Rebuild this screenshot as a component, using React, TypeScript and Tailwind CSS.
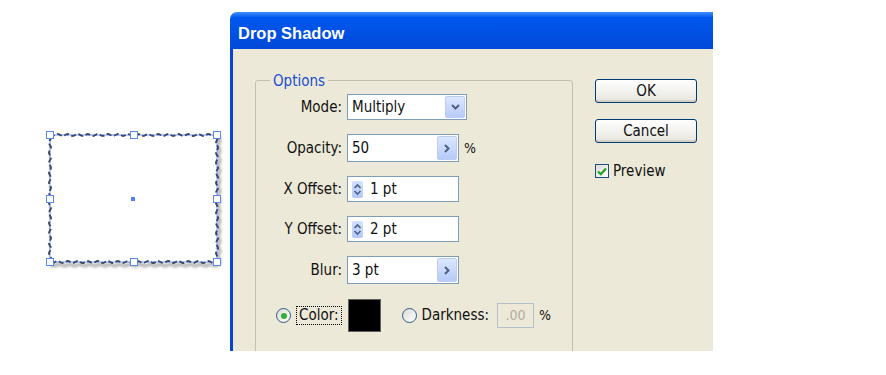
import React from "react";

// wavy outline for the roughened shape on the canvas
function wavyRect(x0: number, y0: number, x1: number, y1: number) {
  const pts: string[] = [];
  const step = 1.5;
  const amp = 0.9;
  const push = (x: number, y: number) => pts.push(`${x.toFixed(1)},${y.toFixed(1)}`);
  for (let x = x0; x <= x1; x += step) push(x, y0 + Math.sin(x / 1.6) * amp);
  for (let y = y0; y <= y1; y += step) push(x1 + Math.sin(y / 1.6) * amp, y);
  for (let x = x1; x >= x0; x -= step) push(x, y1 + Math.sin(x / 1.6) * amp);
  for (let y = y1; y >= y0; y -= step) push(x0 + Math.sin(y / 1.6) * amp, y);
  return "M" + pts.join(" L") + " Z";
}

function Artwork() {
  const d = wavyRect(10, 10, 177, 137);
  const hx = [10, 94, 177];
  const hy = [10, 74, 137];
  const handles: [number, number][] = [];
  hx.forEach((x) => hy.forEach((y) => !(x === 94 && y === 74) && handles.push([x, y])));
  return (
    <svg width="190" height="150" viewBox="0 0 190 150">
      <defs>
        <filter id="sh" x="-10%" y="-10%" width="120%" height="120%">
          <feGaussianBlur stdDeviation="1.6" />
        </filter>
      </defs>
      <path d={d} transform="translate(2 3)" fill="none" stroke="#9a9a9a" strokeWidth="2.5" filter="url(#sh)" />
      <path d={d} fill="#fff" stroke="#1e1e1e" strokeWidth="1.8" strokeDasharray="5 2.6" />
      <rect x="10" y="10" width="167" height="127" fill="none" stroke="#5b86ec" strokeWidth="0.8" />
      {handles.map(([x, y]) => (
        <rect key={`${x}-${y}`} x={x - 3.5} y={y - 3.5} width="7" height="7" fill="#fff" stroke="#5b86ec" strokeWidth="1" />
      ))}
      <rect x="91" y="72" width="4" height="4" fill="#4f7ff0" />
    </svg>
  );
}

function ArrowBtn({ dir }: { dir: "down" | "right" }) {
  return (
    <div className="m-px flex w-[20px] items-center justify-center rounded-[2px] border border-[#bccdf5] bg-linear-to-b from-[#dce7ff] to-[#b7cbfa]">
      {dir === "down" ? (
        <svg width="9" height="6" viewBox="0 0 9 6">
          <path d="M1 1 L4.5 4.5 L8 1" fill="none" stroke="#4d6185" strokeWidth="2" />
        </svg>
      ) : (
        <svg width="6" height="9" viewBox="0 0 6 9">
          <path d="M1 1 L4.5 4.5 L1 8" fill="none" stroke="#4d6185" strokeWidth="2" />
        </svg>
      )}
    </div>
  );
}

function Spinner() {
  return (
    <div className="ml-[4px] flex h-[17px] w-[11px] items-center justify-center self-center rounded-[2px] bg-linear-to-b from-[#d4e1ff] to-[#b4c8f8]">
      <svg width="9" height="15" viewBox="0 0 9 15">
        <path d="M1.5 6 L4.5 3 L7.5 6" fill="none" stroke="#4d6185" strokeWidth="1.6" />
        <path d="M1.5 9 L4.5 12 L7.5 9" fill="none" stroke="#4d6185" strokeWidth="1.6" />
      </svg>
    </div>
  );
}

function Row({ label, children }: { label: string; children: React.ReactNode }) {
  return (
    <div className="flex items-center">
      <div className="w-[86px] text-right">{label}</div>
      <div className="ml-[5px] flex items-center">{children}</div>
    </div>
  );
}

function Radio({ on }: { on?: boolean }) {
  return (
    <div className="flex h-[15px] w-[15px] items-center justify-center rounded-full border border-[#2f5a8a] bg-linear-to-br from-[#dcdcd4] to-white">
      {on && <div className="h-[6px] w-[6px] rounded-full bg-[#2fb036]" />}
    </div>
  );
}

function XpButton({ children }: { children: React.ReactNode }) {
  return (
    <div className="flex h-[24px] w-[102px] items-center justify-center rounded-[3px] border border-[#003c74] bg-linear-to-b from-white to-[#e6e5de] shadow-[inset_0_-2px_0_#d6d0c5]">
      {children}
    </div>
  );
}

export default function App() {
  return (
    <div className="flex h-[375px] w-[886px] overflow-hidden bg-white font-['DejaVu_Sans_Condensed','DejaVu_Sans',sans-serif] text-[15px] text-[#111]">
      {/* canvas */}
      <div className="w-[230px] shrink-0 pl-[40px] pt-[125px]">
        <Artwork />
      </div>

      {/* dialog */}
      <div className="mt-[12px] flex h-[339px] w-[483px] flex-col overflow-hidden rounded-tl-[7px]">
        <div className="flex h-[37px] shrink-0 items-center bg-linear-to-b from-[#3d8dfb] via-[#0058ee] via-15% to-[#0048d8] pl-[8px] pt-[5px] font-['Liberation_Sans',sans-serif] text-[16.5px] font-bold text-white">
          Drop Shadow
        </div>
        <div className="flex min-h-0 flex-1 border-l-[3px] border-[#0843d8] bg-[#ece9d8]">
          {/* group box */}
          <div className="relative ml-[22px] mt-[31px] h-[300px] w-[318px] shrink-0 rounded-[3px] border border-[#c3c0b2] pt-[13px]">
            <div className="absolute left-[14px] top-[-11px] bg-[#ece9d8] px-[3px] text-[#1a4ed0]">Options</div>
            <div className="flex flex-col gap-[14px]">
              <Row label="Mode:">
                <div className="flex h-[26px] w-[120px] border border-[#7f9db9] bg-white">
                  <span className="flex-1 pl-[4px] leading-[24px]">Multiply</span>
                  <ArrowBtn dir="down" />
                </div>
              </Row>
              <Row label="Opacity:">
                <div className="flex h-[28px] w-[112px] border border-[#7f9db9] bg-white">
                  <span className="flex-1 pl-[4px] leading-[26px]">50</span>
                  <ArrowBtn dir="right" />
                </div>
                <span className="ml-[5px] text-[14px]">%</span>
              </Row>
              <Row label="X Offset:">
                <div className="flex h-[26px] w-[112px] border border-[#7f9db9] bg-white">
                  <Spinner />
                  <span className="pl-[7px] leading-[24px]">1 pt</span>
                </div>
              </Row>
              <Row label="Y Offset:">
                <div className="flex h-[26px] w-[112px] border border-[#7f9db9] bg-white">
                  <Spinner />
                  <span className="pl-[7px] leading-[24px]">2 pt</span>
                </div>
              </Row>
              <Row label="Blur:">
                <div className="flex h-[28px] w-[112px] border border-[#7f9db9] bg-white">
                  <span className="flex-1 pl-[4px] leading-[26px]">3 pt</span>
                  <ArrowBtn dir="right" />
                </div>
              </Row>
              <div className="mt-px flex items-center pl-[20px]">
                <Radio on />
                <span className="ml-[5px] border border-dotted border-black px-[2px] leading-[17px]">Color:</span>
                <div className="ml-[6px] h-[33px] w-[33px] border border-[#606060] bg-black" />
                <div className="ml-[21px]">
                  <Radio />
                </div>
                <span className="ml-[5px]">Darkness:</span>
                <div className="ml-[8px] flex h-[25px] w-[37px] items-center justify-center border border-[#b4c0cc] text-[14px] text-[#b0ad9e]">
                  .00
                </div>
                <span className="ml-[5px] text-[14px]">%</span>
              </div>
            </div>
          </div>

          {/* buttons */}
          <div className="ml-[22px] mt-[30px] flex flex-col">
            <XpButton>OK</XpButton>
            <div className="mt-[16px]">
              <XpButton>Cancel</XpButton>
            </div>
            <div className="mt-[17px] flex items-center">
              <div className="flex h-[14px] w-[14px] items-center justify-center border border-[#1c5180] bg-linear-to-br from-[#dcdcd4] to-white">
                <svg width="10" height="9" viewBox="0 0 10 9">
                  <path d="M1 4.5 L3.8 7.2 L9 1.5" fill="none" stroke="#21a121" strokeWidth="2.2" />
                </svg>
              </div>
              <span className="ml-[4px]">Preview</span>
            </div>
          </div>
        </div>
      </div>
    </div>
  );
}
